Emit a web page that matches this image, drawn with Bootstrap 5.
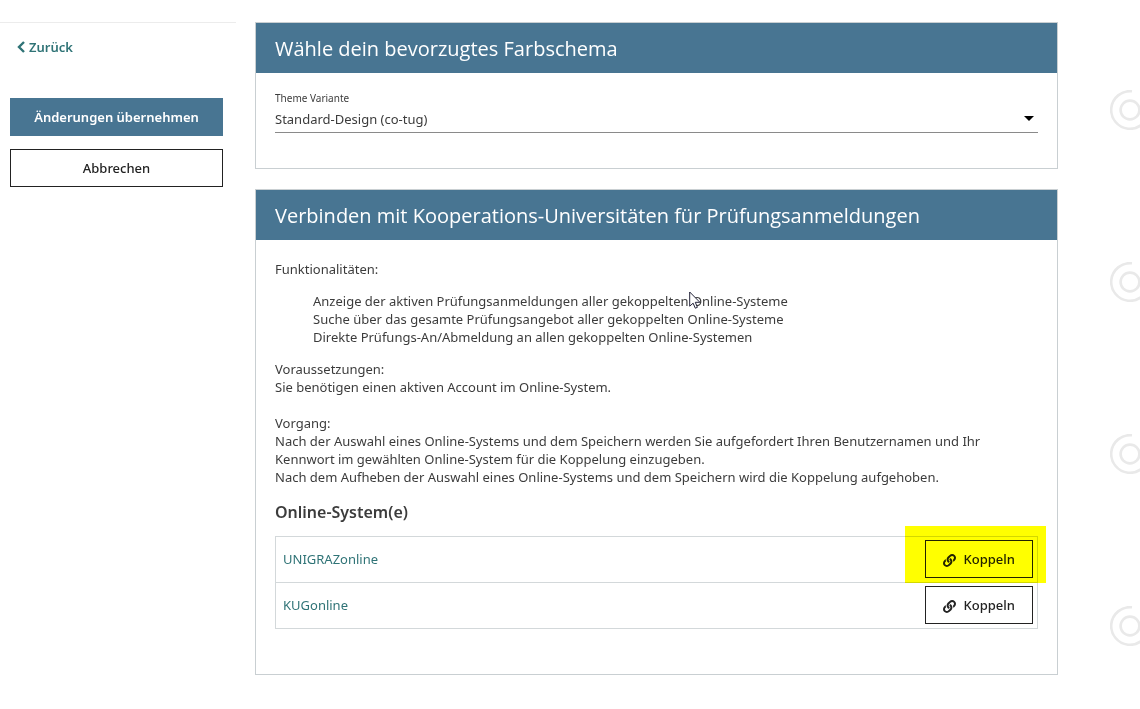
<!DOCTYPE html>
<html lang="de">
<head>
<meta charset="utf-8">
<meta name="viewport" content="width=device-width, initial-scale=1">
<title>Farbschema und Online-Systeme</title>
<link href="https://cdn.jsdelivr.net/npm/bootstrap@5.3.0/dist/css/bootstrap.min.css" rel="stylesheet">
<script src="https://cdn.jsdelivr.net/npm/bootstrap@5.3.0/dist/js/bootstrap.bundle.min.js" defer></script>
<style>
  body { font-family: "Noto Sans", "Open Sans", sans-serif; font-size: 13px; line-height: 18px; color: #3c3c3c; background: #fff; }
  a { color: #2f7376; text-decoration: none; }
  .layout { padding-top: 22px; }
  .sidebar { width: 236px; flex: none; border-top: 1px solid #ececec; padding: 15px 13px 0 10px; }
  .back { font-weight: 600; padding-left: 7px; margin-bottom: 41px; }
  .btn { border-radius: 0; font-size: 13px; line-height: 18px; font-weight: 500; padding: 9px 17px; }
  .actions { gap: 13px; }
  .btn-apply, .btn-apply:hover { background: #487592; border-color: #487592; color: #fff; font-weight: 600; }
  .btn-line, .btn-line:hover { border-color: #222; color: #222; background: #fff; }
  .content { min-width: 0; margin-left: 19px; }
  .panels { gap: 20px; }
  .panel { border: 1px solid #c9cfd2; }
  .panel-title { background: #487592; color: #fff; font-family: "Open Sans", sans-serif; font-size: 20px; line-height: 26px; font-weight: 400; padding: 13px 19px 11px; margin: 0; }
  .panel-content { padding: 18px 19px 35px; }
  .panel-tall { padding: 20px 19px 45px; }
  .field-label { font-size: 10px; line-height: 14px; }
  .form-select { border: 0; border-bottom: 1px solid #8a8a8a; border-radius: 0; padding: 5px 24px 4px 0; font-size: 13px; line-height: 18px; color: #3c3c3c;
    background-image: url("data:image/svg+xml,%3Csvg xmlns='http://www.w3.org/2000/svg' viewBox='0 0 10 5'%3E%3Cpath d='M0 0h10L5 5z'/%3E%3C/svg%3E"); background-size: 10px 5px; background-position: right 4px center; }
  .features { margin: 14px 0; padding-left: 38px; }
  .procedure { margin-top: 18px; }
  .systems { border: 1px solid #d3d8da; }
  .systems td { border-top: 1px solid #d3d8da; padding: 3px 4px 4px 7px; vertical-align: middle; }
  .systems-title { font-size: 16px; line-height: 22px; font-weight: 600; margin: 15px 0 13px; }
  .highlight::after { content: ""; position: absolute; inset: -14px -13px -5px -20px; background: #ff0; mix-blend-mode: multiply; pointer-events: none; }
  .pointer { left: 0; top: -1px; }
  .rings { width: 82px; flex: none; overflow: hidden; padding: 68px 0 0 52px; gap: 132px; color: #e9e9e9; }
  .rings svg { flex: none; }
</style>
</head>
<body>
<svg class="d-none">
  <symbol id="ring" viewBox="0 0 40 40"><g fill="none" stroke="currentColor" stroke-width="2.6"><path d="M22 1.3A18.8 18.8 0 1 0 38.7 22"/><circle cx="20" cy="20" r="9.4"/></g></symbol>
  <symbol id="link" viewBox="0 0 512 512"><path fill="currentColor" d="M326.612 185.391c59.747 59.809 58.927 155.698.36 214.59-.11.12-.24.25-.36.37l-67.2 67.2c-59.27 59.27-155.699 59.262-214.96 0-59.27-59.26-59.27-155.7 0-214.96l37.106-37.106c9.84-9.84 26.786-3.3 27.294 10.606.648 17.722 3.826 35.527 9.69 52.721 1.986 5.822.567 12.262-3.783 16.612l-13.087 13.087c-28.026 28.026-28.905 73.66-1.155 101.96 28.024 28.579 74.086 28.749 102.325.51l67.2-67.19c28.191-28.191 28.073-73.757 0-101.83-3.701-3.694-7.429-6.564-10.341-8.569a16.037 16.037 0 0 1-6.947-12.606c-.396-10.567 3.348-21.456 11.698-29.806l21.054-21.055c5.521-5.521 14.182-6.199 20.584-1.731a152.482 152.482 0 0 1 20.522 17.197zM467.547 44.449c-59.261-59.262-155.69-59.27-214.96 0l-67.2 67.2c-.12.12-.25.25-.36.37-58.566 58.892-59.387 154.781.36 214.59a152.454 152.454 0 0 0 20.521 17.196c6.402 4.468 15.064 3.789 20.584-1.731l21.054-21.055c8.35-8.35 12.094-19.239 11.698-29.806a16.037 16.037 0 0 0-6.947-12.606c-2.912-2.005-6.64-4.875-10.341-8.569-28.073-28.073-28.191-73.639 0-101.83l67.2-67.19c28.239-28.239 74.3-28.069 102.325.51 27.75 28.3 26.872 73.934-1.155 101.96l-13.087 13.087c-4.35 4.35-5.769 10.79-3.783 16.612 5.864 17.194 9.042 34.999 9.69 52.721.509 13.906 17.454 20.446 27.294 10.606l37.106-37.106c59.271-59.259 59.271-155.699.001-214.959z"/></symbol>
</svg>
<div class="layout d-flex align-items-start overflow-hidden">
  <aside class="sidebar">
    <div class="back"><a href="#" class="d-inline-flex align-items-center gap-1"><svg width="8" height="12" viewBox="0 0 8 12" fill="none" stroke="currentColor" stroke-width="2.4"><path d="M7 1 2 6l5 5"/></svg>Zurück</a></div>
    <div class="actions d-grid">
      <button type="submit" form="settings" class="btn btn-apply">Änderungen übernehmen</button>
      <button type="button" class="btn btn-line">Abbrechen</button>
    </div>
  </aside>
  <main class="content flex-grow-1">
    <form id="settings" class="panels d-flex flex-column">
      <section class="panel">
        <h2 class="panel-title">Wähle dein bevorzugtes Farbschema</h2>
        <div class="panel-content">
          <label class="field-label d-block" for="theme">Theme Variante</label>
          <select id="theme" class="form-select"><option>Standard-Design (co-tug)</option></select>
        </div>
      </section>
      <section class="panel">
        <h2 class="panel-title">Verbinden mit Kooperations-Universitäten für Prüfungsanmeldungen</h2>
        <div class="panel-tall">
          <div>Funktionalitäten:</div>
          <ul class="features list-unstyled">
            <li>Anzeige der aktiven Prüfungsanmeldungen aller gekoppelten<span class="position-relative"><svg class="pointer position-absolute" width="12" height="19" viewBox="0 0 12 19"><path d="M.7 1v14.2l3.4-3 2.2 5 2.1-.9-2.1-5h4.6z" fill="#fff" stroke="#222238"/></svg></span> Online-Systeme</li>
            <li>Suche über das gesamte Prüfungsangebot aller gekoppelten Online-Systeme</li>
            <li>Direkte Prüfungs-An/Abmeldung an allen gekoppelten Online-Systemen</li>
          </ul>
          <div>Voraussetzungen:<br>Sie benötigen einen aktiven Account im Online-System.</div>
          <div class="procedure">Vorgang:<br>Nach der Auswahl eines Online-Systems und dem Speichern werden Sie aufgefordert Ihren Benutzernamen und Ihr Kennwort im gewählten Online-System für die Koppelung einzugeben.<br>Nach dem Aufheben der Auswahl eines Online-Systems und dem Speichern wird die Koppelung aufgehoben.</div>
          <h3 class="systems-title">Online-System(e)</h3>
          <table class="systems w-100">
            <tbody>
              <tr><td><a href="#">UNIGRAZonline</a></td><td class="text-end"><span class="highlight position-relative d-inline-block"><button type="button" class="btn btn-line"><svg width="13" height="13" class="me-2"><use href="#link"/></svg>Koppeln</button></span></td></tr>
              <tr><td><a href="#">KUGonline</a></td><td class="text-end"><button type="button" class="btn btn-line"><svg width="13" height="13" class="me-2"><use href="#link"/></svg>Koppeln</button></td></tr>
            </tbody>
          </table>
        </div>
      </section>
    </form>
  </main>
  <div class="rings d-flex flex-column" aria-hidden="true">
    <svg width="40" height="40"><use href="#ring"/></svg>
    <svg width="40" height="40"><use href="#ring"/></svg>
    <svg width="40" height="40"><use href="#ring"/></svg>
    <svg width="40" height="40"><use href="#ring"/></svg>
  </div>
</div>
</body>
</html>
